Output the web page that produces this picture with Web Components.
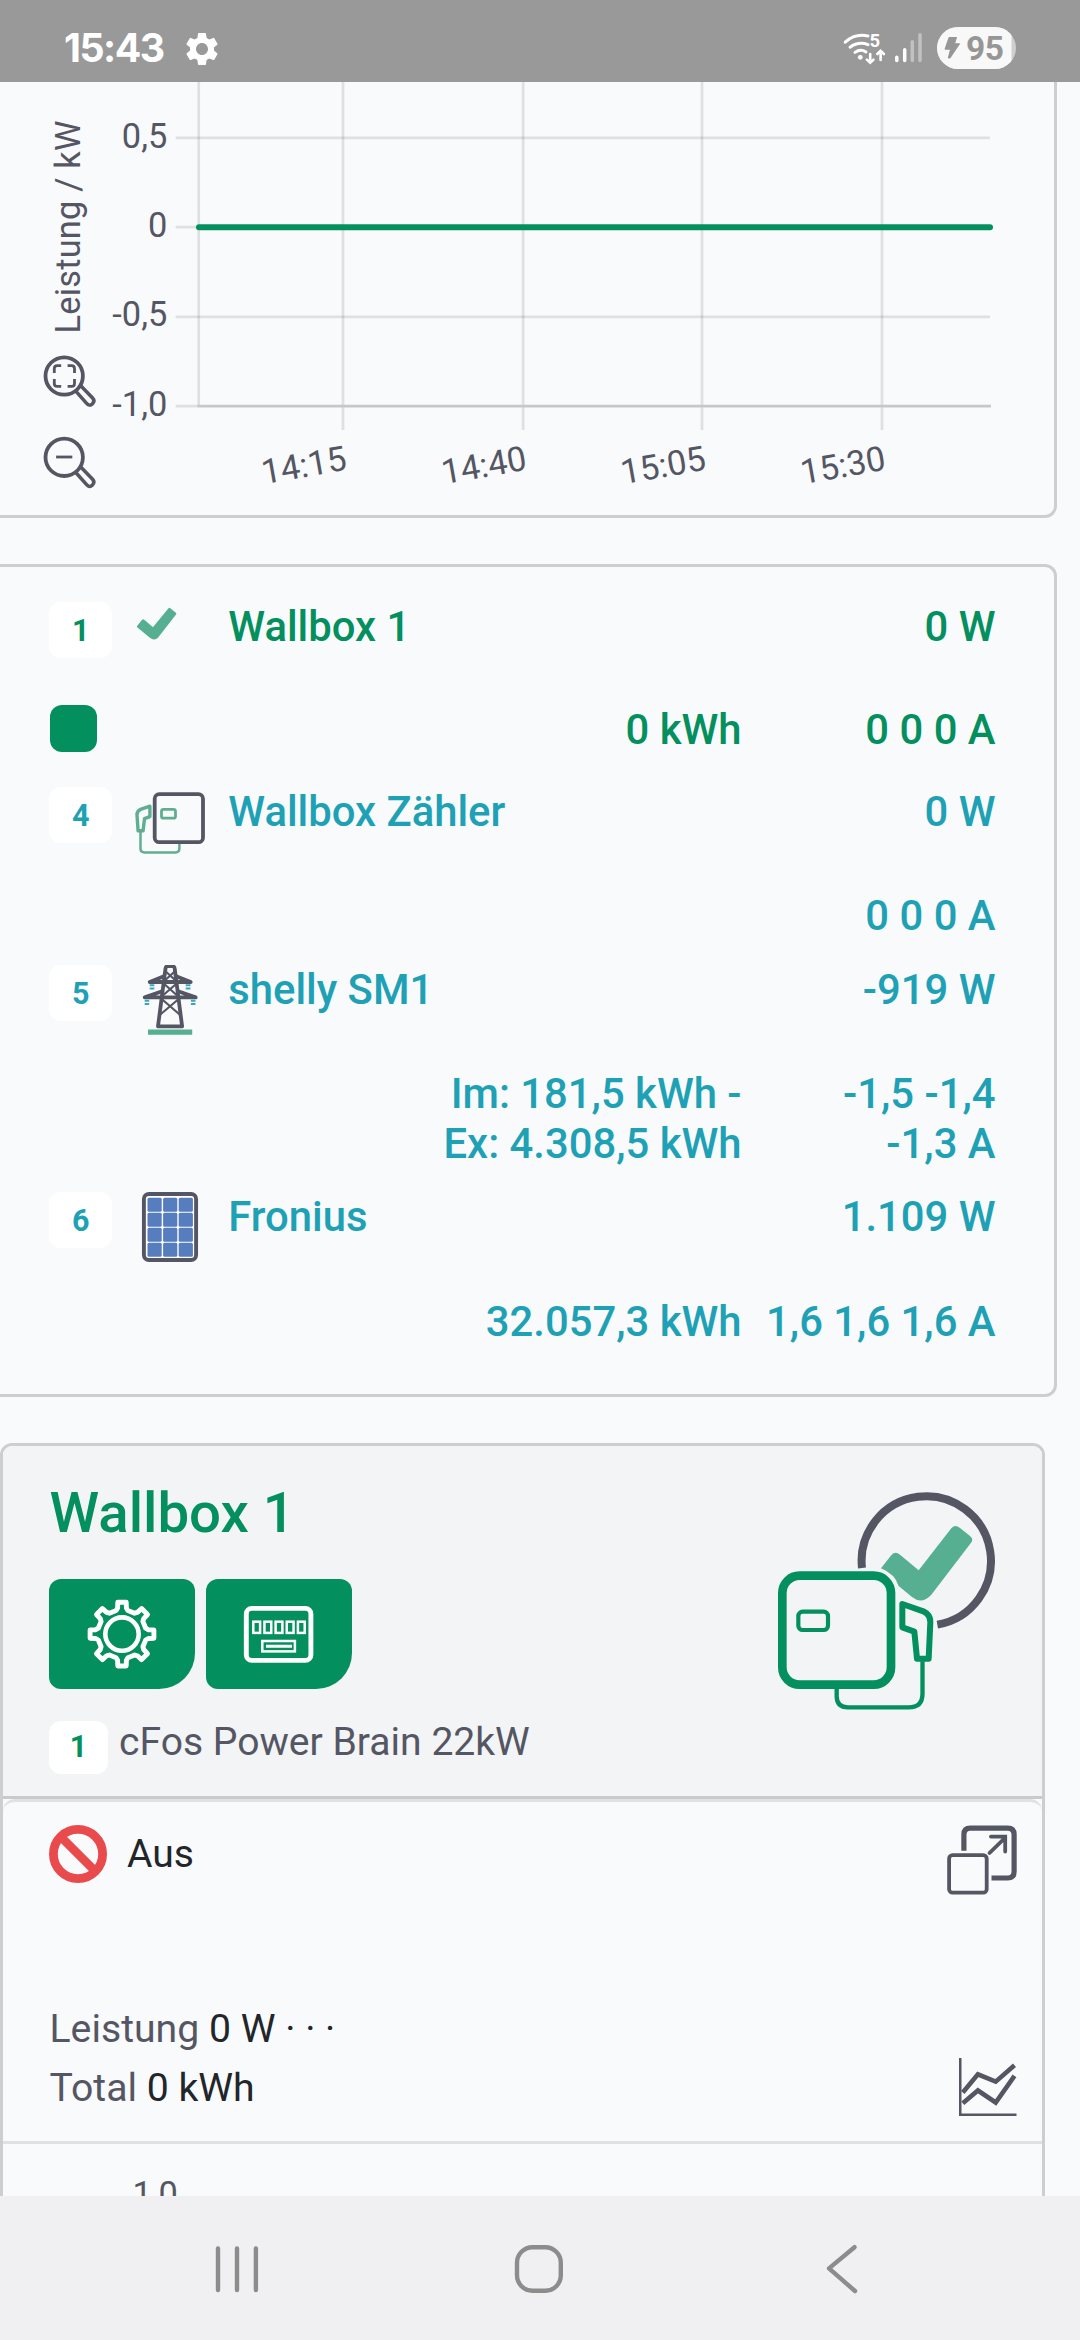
<!DOCTYPE html>
<html lang="de">
<head>
<meta charset="utf-8">
<title>cFos Power Brain</title>
<style>
html,body{margin:0;padding:0}
body{width:1080px;height:2340px;overflow:hidden;background:#f8fafc;font-family:Roboto,"Liberation Sans",sans-serif;color:#222529}
</style>
</head>
<body>
<app-screen>
  <status-bar slot="top"></status-bar>
  <ui-card class="a"><power-chart></power-chart></ui-card>
  <ui-card class="b">
    <device-row badge="1" name="Wallbox 1" power="0 W" energy="0 kWh" current="0 0 0 A" icon="check" swatch style="--m:102px;--d:83px;color:#038f5e"></device-row>
    <device-row badge="4" name="Wallbox Zähler" power="0 W" current="0 0 0 A" icon="wallbox" style="--m:103px;--d:75px"></device-row>
    <device-row badge="5" name="shelly SM1" power="-919 W" energy="Im: 181,5 kWh -|Ex: 4.308,5 kWh" current="-1,5 -1,4|-1,3 A" icon="pylon" style="--m:103px;--d:124px"></device-row>
    <device-row badge="6" name="Fronius" power="1.109 W" energy="32.057,3 kWh" current="1,6 1,6 1,6 A" icon="solar" style="--m:104px;--d:60px"></device-row>
  </ui-card>
  <wallbox-card></wallbox-card>
  <nav-bar slot="bottom"></nav-bar>
</app-screen>
<script>
const define = (name, html) => customElements.define(name, class extends HTMLElement {
  constructor() {
    super();
    this.attachShadow({ mode: 'open' }).innerHTML = typeof html === 'function' ? html(this) : html;
  }
});

define('app-screen', `<style>
:host{display:flex;flex-direction:column;width:1080px;height:2340px}
main{flex:none;height:2114px;overflow:hidden;display:flex;flex-direction:column;align-items:flex-start;gap:46px}
::slotted(ui-card.a){height:436px;border-top:0!important;border-radius:0 0 12px 0!important}
::slotted(ui-card.b){height:833px;padding-top:35px}
</style><slot name="top"></slot><main><slot></slot></main><slot name="bottom"></slot>`);

define('ui-card', `<style>
:host{display:block;flex:none;box-sizing:border-box;width:1057px;border:3px solid #cdced0;border-left:0;border-radius:0 12px 12px 0}
</style><slot></slot>`);

define('status-bar', `<style>
:host{display:flex;flex:none;height:82px;background:#999;color:#fff;align-items:flex-start}
.t{margin:24px 0 0 64px;width:118px;font:700 39.3px/48px Inter,Roboto,sans-serif;letter-spacing:-1.5px}
.g{width:40px;height:40px;margin-top:28.5px}
.r{margin-left:auto;width:240px;height:82px}
text{font-family:Roboto,sans-serif;font-weight:700}
</style>
<span class="t">15:43</span>
<svg class="g" viewBox="0 0 24 24"><path fill="#fff" d="M19.14 12.94c.04-.3.06-.61.06-.94 0-.32-.02-.64-.07-.94l2.03-1.58c.18-.14.23-.41.12-.61l-1.92-3.32c-.12-.22-.37-.29-.59-.22l-2.39.96c-.5-.38-1.03-.7-1.62-.94l-.36-2.54c-.04-.24-.24-.41-.48-.41h-3.84c-.24 0-.43.17-.47.41l-.36 2.54c-.59.24-1.13.57-1.62.94l-2.39-.96c-.22-.08-.47 0-.59.22L2.74 8.87c-.12.21-.08.47.12.61l2.03 1.58c-.05.3-.09.63-.09.94s.02.64.07.94l-2.03 1.58c-.18.14-.23.41-.12.61l1.92 3.32c.12.22.37.29.59.22l2.39-.96c.5.38 1.03.7 1.62.94l.36 2.54c.05.24.24.41.48.41h3.84c.24 0 .44-.17.47-.41l.36-2.54c.59-.24 1.13-.56 1.62-.94l2.39.96c.22.08.47 0 .59-.22l1.92-3.32c.12-.22.07-.47-.12-.61l-2.01-1.58zM12 15.6c-1.98 0-3.6-1.62-3.6-3.6s1.62-3.6 3.6-3.6 3.6 1.62 3.6 3.6-1.62 3.6-3.6 3.6z"/></svg>
<svg class="r" viewBox="840 0 240 82">
<g fill="none" stroke="#fff" stroke-width="3" stroke-linecap="round">
<path d="M845.2 42.2Q855 33.2 868 36"/><path d="M850 47.2Q858.5 41 868 44.6"/><path d="M855 52.4Q860.5 48.3 866 52"/>
<path d="M870.2 54V62M866.9 59.6L870.2 62.8L873.5 59.6M880.6 60V51.5M877.3 54L880.6 50.8L883.9 54" stroke-width="2.6"/></g>
<circle cx="860.3" cy="57.3" r="2.4" fill="#fff"/>
<text x="869.6" y="47.4" font-size="18.5" fill="#fff">5</text>
<g stroke-width="3.5" stroke-linecap="round" stroke="#fff"><path d="M896.8 57.3V60.4M904.7 49.8V60.4"/><path d="M912.3 41.8V60.4M920 34.8V60.4" stroke="#c1c1c1"/></g>
<clipPath id="p"><rect x="937" y="27" width="79" height="42" rx="21"/></clipPath>
<g clip-path="url(#p)"><rect x="937" y="27" width="79" height="42" fill="#cfcfcf"/><rect x="937" y="27" width="74.5" height="42" fill="#f8f8f8"/></g>
<path d="M949 37.5H956.5L954.5 43.8H959.6L950 58H948.3L950.6 49.2H945Z" fill="#969696" stroke="#969696" stroke-width="1" stroke-linejoin="round"/>
<text x="966" y="60" font-size="33.5" fill="#969696" textLength="38">95</text>
</svg>`);

const mag = inner => `<circle cx="64.2" cy="376" r="18.7" stroke-width="3.8"/><path d="M75.8 391.2L86.6 403.4Q89.5 406.6 92.3 403.9Q95.4 401 92.6 398L81 386" stroke-width="3.5"/>${inner}`;
define('power-chart', `<style>
:host{display:block}svg{display:block}
text{font-family:Roboto,sans-serif;font-size:34.4px;fill:#555663}
</style>
<svg width="1054" height="433" viewBox="0 82 1054 433">
<g stroke="#000" stroke-opacity=".1" stroke-width="2.8">
<path d="M175.6 137.8H990M175.6 227.2H990M175.6 316.8H990M175.6 406.2H198"/>
<path d="M198.7 82V407M343 82V430M523.1 82V430M702 82V430M882 82V430"/></g>
<path d="M198 406.2H991" stroke="#c6c7c9" stroke-width="2.8"/>
<path d="M199 227.2H990" stroke="#038f5e" stroke-width="6" stroke-linecap="round"/>
<g text-anchor="end"><text x="167.3" y="147.5">0,5</text><text x="167.3" y="236.8">0</text><text x="167.3" y="326.4">-0,5</text><text x="167.3" y="415.6">-1,0</text>
<text transform="translate(348 469.5) rotate(-10)">14:15</text><text transform="translate(528 469.5) rotate(-10)">14:40</text><text transform="translate(707.4 469.5) rotate(-10)">15:05</text><text transform="translate(887 469.5) rotate(-10)">15:30</text></g>
<text transform="translate(80.3 333.5) rotate(-90)" textLength="213">Leistung / kW</text>
<g fill="none" stroke="#555663" stroke-linejoin="round">
${mag('<path d="M54.3 373V368.6Q54.3 365.7 57.2 365.7H61.2M67.6 365.7H71.6Q74.5 365.7 74.5 368.6V373M74.5 379V383.4Q74.5 386.3 71.6 386.3H67.6M61.2 386.3H57.2Q54.3 386.3 54.3 383.4V379" stroke-width="2.8"/>')}
<g transform="translate(0 81.3)">${mag('<path d="M56.1 375.7H72.3" stroke-width="2.8"/>')}</g></g>
</svg>`);

const cells = [147.8, 163.4, 179].map(x => [1197.7, 1212.8, 1227.8, 1242.8].map(y => `<rect x="${x}" y="${y}" width="14.2" height="14" rx="1.5"/>`).join('')).join('');
const icons = {
  check: [602, '<path d="M138.6 626.5L143.4 620.6L153.4 629L169.8 609.2L175.3 613.8L157.6 636.5Q154.6 639.6 151 636.8Z" fill="#55af90" stroke="#55af90" stroke-width="2.6" stroke-linejoin="round"/>'],
  wallbox: [787, '<g fill="none"><rect x="155" y="794.2" width="48.3" height="48" rx="4.5" stroke="#555663" stroke-width="3.8"/><g stroke="#5fae90" stroke-linejoin="round"><rect x="161.8" y="809.4" width="14" height="8.8" rx="2" stroke-width="2.8"/><path d="M150.2 806.2L141.5 809.1Q137.2 810.8 137.3 815L138.4 830.8H143.4L144.8 818.6L150.2 816.6Z" stroke-width="3.4"/><path d="M140.8 832V848.5Q140.8 852.4 144.8 852.4H175.8Q179.7 852.4 179.7 848.5V844" stroke-width="2.5"/></g></g>'],
  pylon: [965, '<path d="M148.3 1032.1H192.5" stroke="#55af90" stroke-width="5.4"/><g fill="none" stroke="#555663" stroke-linejoin="round"><path d="M158.3 1026.3L165.8 968.5Q166.2 966.2 168 966.2H172.8Q174.6 966.2 175 968.5L182.4 1026.3Z" stroke-width="3.8"/><path d="M164.2 976.2L150 982H191L176.5 976.2M162.5 991.2L145 997.4H196L178.4 991.2" stroke-width="3.8"/><path d="M165.5 971L177 981.5M175.5 971L164 981.5M164 983.5L178 996M177 983.5L162.5 996M162 999L180.5 1015M179 999L160 1015" stroke-width="2.2"/></g><path d="M150 985.2H154.6M150 988.6H154.6M186 985.2H190.8M186 988.6H190.8M145 1000.8H149.5M145 1004H149.5M191.2 1000.8H195.8M191.2 1004H195.8" stroke="#3aa8bc" stroke-width="2"/>'],
  solar: [1192, `<rect x="144.2" y="1194" width="52.2" height="66" rx="5" fill="#fff" stroke="#555663" stroke-width="3.9"/><g fill="#567dbd">${cells}</g>`]
};
define('id-badge', `<style>
:host{display:flex;flex:none;box-sizing:border-box;justify-content:center;width:63px;height:56px;border-radius:12px;background:#fff;font:700 30.5px/57px Roboto,sans-serif}
</style><slot></slot>`);

customElements.define('device-row', class extends HTMLElement {
  connectedCallback() {
    const a = n => this.getAttribute(n) || '';
    const lines = s => s.split('|').map(l => `<div>${l}</div>`).join('');
    const [y, art] = icons[a('icon')];
    this.attachShadow({ mode: 'open' }).innerHTML = `<style>
:host{display:block;color:#1ea1b5;font:500 41.8px/50px Roboto,sans-serif;padding:0 58.5px 0 49.3px}
.m,.d{display:flex;align-items:flex-start}
.m{height:var(--m)}.d{height:var(--d)}
svg{flex:none;width:116px;height:80px}
.n{flex:1;white-space:pre}
.s{width:47px;height:47px;border-radius:12px;background:#038f5e;margin:1px 0 0 1px}
.e{margin-left:auto;text-align:right;padding-top:1px}
.c{width:254px;text-align:right;padding-top:1px}
</style>
<div class="m"><id-badge>${a('badge')}</id-badge><svg viewBox="112.3 ${y} 116 80">${art}</svg><span class="n">${a('name')}</span><span>${a('power')}</span></div>
<div class="d">${this.hasAttribute('swatch') ? '<div class="s"></div>' : ''}<div class="e">${lines(a('energy'))}</div><div class="c">${lines(a('current'))}</div></div>`;
  }
});

// Outline of the eight-tooth settings wheel, built tooth by tooth.
const gear = () => {
  const p = [];
  for (let i = 0; i < 8; i++) {
    const c = i * 45;
    for (const [r, o] of [[24.4, -14], [26.6, -9.5], [32.2, -7.5], [32.2, 7.5], [26.6, 9.5], [24.4, 14]]) {
      const t = (c + o) * Math.PI / 180;
      p.push((122 + r * Math.sin(t)).toFixed(1) + ' ' + (1633.4 - r * Math.cos(t)).toFixed(1));
    }
  }
  return 'M' + p.join('L') + 'Z';
};
const digits = [0, 1, 2, 3, 4].map(i => `<rect x="${253.3 + i * 11.15}" y="1621" width="6.8" height="11.2"/>`).join('');

define('icon-button', `<style>
:host{display:block;width:146px;height:110.5px;background:#038f5e;border-radius:12px 12px 36px 12px;overflow:hidden}
</style><slot></slot>`);

define('wallbox-card', `<style>
:host{display:block;flex:none;box-sizing:border-box;width:1045px;height:900px;border:3px solid #cdced0;border-radius:12px 12px 0 0}
header{box-sizing:border-box;height:353px;background:#f2f4f6;border-bottom:3px solid #c8cacd;border-radius:9px 9px 0 0;padding:37px 46px 0 46px;display:flex;justify-content:space-between}
h2{margin:0;font:500 56.4px/60px Roboto,sans-serif;color:#038f5e;height:95.5px;padding-left:.5px}
.b{display:flex;gap:11px;height:142px}
svg{display:block}
.w{margin-top:7px}
.i{display:flex;gap:11px;font:39.1px/48px Roboto,sans-serif;color:#555663}
.i id-badge{width:59px;height:52.5px;color:#038f5e;line-height:52px;margin-top:.5px}
.i span{margin-top:-3px}
.s{box-sizing:border-box;height:345px;border-top:3px solid #dfe1e5;border-bottom:3px solid #dfe1e5;border-radius:12px 12px 0 0;padding:23px 25.5px 0 46px;display:flex;justify-content:space-between}
.l,.v{display:flex;flex-direction:column}
.o{display:flex;gap:20px;height:174.5px;font:39.1px/58px Roboto,sans-serif}
.p{font:39.2px/59.3px Roboto,sans-serif;white-space:pre;padding-left:.5px}
.p b{font-weight:400;color:#555663}
.v{gap:162px;align-items:flex-end}
.x{font:34.4px/40px Roboto,sans-serif;color:#555663;margin:29.5px 0 0 129.5px}
</style>
<header>
<div><h2>Wallbox 1</h2>
<div class="b">
<icon-button><svg width="146" height="110.5" viewBox="49 1578.3 146 110.5" fill="none" stroke="#fff" stroke-linejoin="round"><path d="${gear()}" stroke-width="4.9"/><circle cx="122" cy="1633.4" r="16.7" stroke-width="4.6"/></svg></icon-button>
<icon-button><svg width="146" height="110.5" viewBox="206 1578.3 146 110.5" fill="none" stroke="#fff"><rect x="246.3" y="1607.7" width="64.6" height="52" rx="5.5" stroke-width="4.9"/><g stroke-width="2.5">${digits}<rect x="262.3" y="1640.3" width="32.6" height="10.4"/></g><path d="M266 1645.5H292" stroke-width="3"/></svg></icon-button>
</div>
<div class="i"><id-badge>1</id-badge><span>cFos Power Brain 22kW</span></div></div>
<svg class="w" width="220" height="222" viewBox="110 150 660 666" fill="none" stroke="#038f5e" stroke-linejoin="round">
<path d="M368 384A194 194 0 1 1 594 554" stroke="#555663" stroke-width="24"/>
<path d="M425 385L454 348Q466 331 482 344L538 391L636 265Q647 252 661 263L691 287Q705 297 694 310L576 464Q548 495 518 471L478 438Q467 402 425 385Z" fill="#55af90" stroke="none"/>
<rect x="129" y="407" width="326" height="327" rx="52" stroke-width="26"/>
<rect x="177" y="515" width="89" height="55" rx="13" stroke-width="12.5"/>
<path d="M489 492L552 514Q573 524 573 546L568 656L533 656L525 575L489 562Z" stroke-width="18"/>
<path d="M549.5 664V761Q549.5 802 508 802H326Q292 802 292 768V746" stroke-width="13"/>
</svg>
</header>
<div class="s">
<div class="l"><div class="o"><svg width="58" height="58" viewBox="0 0 58 58" fill="none" stroke="#e94b4d" stroke-width="8.8"><circle cx="29" cy="29" r="24.6"/><path d="M12 12L46 46"/></svg><span>Aus</span></div>
<div class="p"><b>Leistung</b> 0 W · · ·</div><div class="p"><b>Total</b> 0 kWh</div></div>
<div class="v">
<svg width="70" height="70" viewBox="946.5 1825 70 70" fill="none" stroke="#555663"><path d="M963.4 1850.7V1834.5Q963.4 1828.1 969.8 1828.1H1007.2Q1013.6 1828.1 1013.6 1834.5V1871.8Q1013.6 1878 1007.2 1878H991" stroke-width="5.2"/><rect x="948.6" y="1855.1" width="37.6" height="37.6" rx="3.5" stroke-width="3.8"/><path d="M989 1853L1004 1838.3M990.4 1836.6H1004.7V1851.5" stroke-width="3.8" stroke-linecap="round"/></svg>
<svg width="58" height="60" viewBox="958.5 2056.5 58 60" fill="none" stroke="#555663"><path d="M959.7 2057.5V2114.2H1016" stroke-width="2.6"/><path d="M962.3 2092L977.4 2073.8L995.2 2081.2L1014 2064.8M962.3 2102.8L977.4 2090L995.2 2102L1014 2075.4" stroke-width="4.6"/></svg>
</div></div>
<div class="x">1,0</div>`);

define('nav-bar', `<style>
:host{display:flex;flex:none;height:144px;background:#f0f0f2}
</style><svg width="1080" height="144" viewBox="0 2196 1080 144" fill="none" stroke="#8c8c8c" stroke-width="4.4" stroke-linecap="round" stroke-linejoin="round">
<path d="M218 2248.4V2290M237 2248.4V2290M255.9 2248.4V2290"/><rect x="517" y="2247.2" width="43.8" height="43.6" rx="15.5"/><path d="M854.5 2247.2L829 2268.4L855 2291"/></svg>`);
</script>
</body>
</html>
